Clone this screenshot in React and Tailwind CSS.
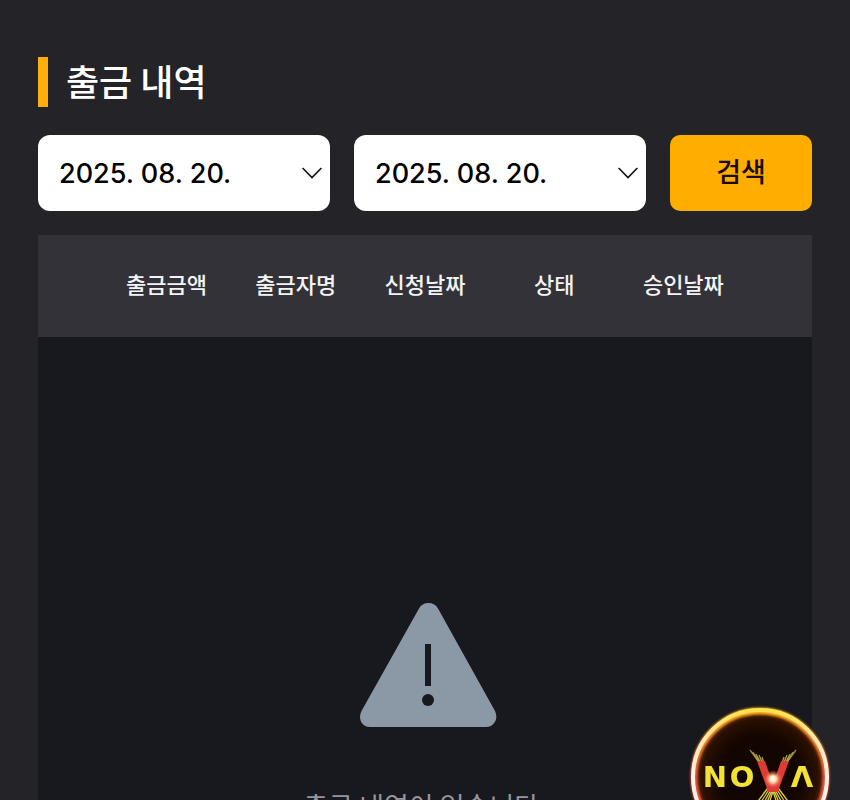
import React from 'react';

const columns = ['출금금액', '출금자명', '신청날짜', '상태', '승인날짜'];

const DateSelect = ({ id, label }) => (
  <div className="relative flex-1">
    <label htmlFor={id} className="sr-only">{label}</label>
    <select
      id={id}
      defaultValue="2025-08-20"
      className="block w-full appearance-none rounded-xl bg-white pt-[19px] pr-12 pb-[17px] pl-[21px] font-['Inter','Noto_Sans_CJK_KR',sans-serif] text-[27px] leading-10 font-medium text-black"
    >
      <option value="2025-08-20">2025. 08. 20.</option>
    </select>
    <svg
      className="pointer-events-none absolute right-2 top-8 h-3 w-5"
      viewBox="0 0 20 12"
      fill="none"
      stroke="#111"
      strokeWidth="1.6"
      aria-hidden="true"
    >
      <path d="M0.6 1 L10 10.6 L19.4 1" />
    </svg>
  </div>
);

const WarningIcon = () => (
  <svg className="ml-1.5 h-[126px] w-[138px]" viewBox="0 0 138 126" aria-hidden="true">
    <path
      d="M60 6.5 Q63 1 69.5 1 Q76 1 79 6.5 L136 109 Q139 116 135.500 120.500 Q132.500 125 127 125 H11 Q5.500 125 2.500 120.500 Q-0.500 115 2.500 109 Z"
      fill="#8a99a5"
    />
    <rect x="66" y="42" width="6" height="42" fill="#18181f" />
    <circle cx="69" cy="98" r="6" fill="#18181f" />
  </svg>
);

const NovaBadge = () => (
  <a href="#nova" aria-label="NOVA" className="fixed -bottom-12 right-[19px] block size-[142px]">
    <svg className="size-full overflow-visible" viewBox="0 0 142 142">
      <defs>
        <radialGradient id="disc">
          <stop offset="0.6" stopColor="#130500" />
          <stop offset="0.85" stopColor="#2a1000" />
          <stop offset="1" stopColor="#7a2c08" />
        </radialGradient>
        <linearGradient id="glow" x1="0" y1="0" x2="0" y2="1">
          <stop offset="0" stopColor="#f9b01c" />
          <stop offset="0.25" stopColor="#f0852f" />
          <stop offset="0.5" stopColor="#e25a3c" />
        </linearGradient>
        <linearGradient id="ring" x1="0" y1="0" x2="0" y2="1">
          <stop offset="0" stopColor="#ffe14d" />
          <stop offset="0.2" stopColor="#ffe9a8" />
          <stop offset="0.5" stopColor="#fff0ea" />
        </linearGradient>
        <linearGradient id="ray" x1="0" y1="44" x2="0" y2="110" gradientUnits="userSpaceOnUse">
          <stop offset="0" stopColor="#8b8440" />
          <stop offset="0.4" stopColor="#e8d84a" />
          <stop offset="1" stopColor="#c8b838" />
        </linearGradient>
        <radialGradient id="flare">
          <stop offset="0" stopColor="#ffffff" />
          <stop offset="0.35" stopColor="#ffe9b8" />
          <stop offset="1" stopColor="#ff5a30" stopOpacity="0" />
        </radialGradient>
        <filter id="soft" x="-10%" y="-10%" width="120%" height="120%">
          <feGaussianBlur stdDeviation="1.2" />
        </filter>
      </defs>
      <circle cx="71" cy="71" r="68" fill="url(#disc)" />
      <circle cx="71" cy="71" r="66" fill="none" stroke="url(#glow)" strokeWidth="7" filter="url(#soft)" />
      <circle cx="71" cy="71" r="67" fill="none" stroke="url(#ring)" strokeWidth="4" />
      <g stroke="url(#ray)" strokeWidth="1.3" fill="none">
        <path d="M61 44 L104 102 M64 46 L101 104 M67 48 L98 106 M70 49 L95 108 M73 51 L92 110" />
        <path d="M107 44 L64 102 M104 46 L67 104 M101 48 L70 106 M98 49 L73 108 M95 51 L76 110" />
      </g>
      <g fontFamily="DejaVu Sans" fontWeight="bold" fontSize="29" textAnchor="middle" fill="#f2e233">
        <text x="26" y="81">N</text>
        <text x="53" y="81">O</text>
        <text x="113" y="81">Λ</text>
        <text x="84" y="86" fontSize="42" fill="#dd3b38">V</text>
      </g>
      <circle cx="84" cy="73" r="9" fill="url(#flare)" />
    </svg>
  </a>
);

export default function App() {
  return (
    <main className="h-screen overflow-hidden bg-[#232328] px-[38px] pt-[57px] font-['Noto_Sans_CJK_KR',sans-serif]">
      <h1 className="border-l-10 border-[#ffae0c] pb-1 pl-[18px] text-4xl leading-[46px] font-medium text-white">
        출금 내역
      </h1>

      <form className="mt-7 flex gap-6" onSubmit={(e) => e.preventDefault()}>
        <DateSelect id="start-date" label="시작일" />
        <DateSelect id="end-date" label="종료일" />
        <button type="submit" className="w-[142px] rounded-[10px] bg-[#ffae00] pb-1 text-[27px] font-medium text-[#180c08]">
          검색
        </button>
      </form>

      <section className="mt-6 min-h-screen bg-[#18181f]">
        <div className="bg-[#333238] px-16">
          <table className="w-full table-fixed">
            <thead>
              <tr className="h-[102px]">
                {columns.map((name) => (
                  <th key={name} scope="col" className="pb-1.5 text-center text-[22px] font-medium whitespace-nowrap text-[#f3f3f5]">
                    {name}
                  </th>
                ))}
              </tr>
            </thead>
          </table>
        </div>

        <div className="flex flex-col items-center pt-[265px]">
          <WarningIcon />
          <p className="mt-[58px] text-[27px] text-[#96969c]">출금 내역이 없습니다.</p>
        </div>
      </section>

      <NovaBadge />
    </main>
  );
}
